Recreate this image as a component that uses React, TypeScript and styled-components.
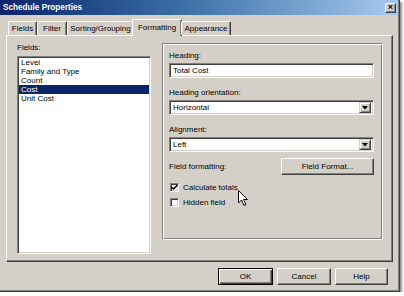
import React from "react";
import styled, { createGlobalStyle, css } from "styled-components";

const Global = createGlobalStyle`
  html, body { margin: 0; padding: 0; background: #ffffff; }
  body { font-family: "Liberation Sans", Arial, sans-serif; font-size: 8px; color: #000; }
`;

const Window = styled.div`
  position: relative;
  width: 400px;
  height: 292px;
  box-sizing: border-box;
  background: #d4d0c8;
  border-right: 1px solid #404040;
  border-bottom: 1px solid #404040;
  box-shadow: inset -1px -1px 0 #808080, 2px 2px 2px rgba(0, 0, 0, 0.45);
  display: flex;
  flex-direction: column;
`;

const TitleBar = styled.div`
  height: 15px;
  margin-right: 1px;
  background: linear-gradient(to right, #0a246a 0%, #3a6ea5 45%, #a6caf0 100%);
  display: flex;
  align-items: center;
  justify-content: space-between;
  padding: 0 2px 0 3px;
`;

const Title = styled.span`
  color: #fff;
  font-weight: bold;
  font-size: 8.2px;
  letter-spacing: 0;
`;

const CloseBtn = styled.div`
  width: 11px;
  height: 10px;
  box-sizing: border-box;
  background: #d4d0c8;
  border: 1px solid;
  border-color: #fff #404040 #404040 #fff;
  box-shadow: inset -1px -1px 0 #808080;
  display: flex;
  align-items: center;
  justify-content: center;
  font-size: 9px;
  font-weight: bold;
  line-height: 1;
`;

const Content = styled.div`
  padding: 4px 6px 0 6px;
  display: flex;
  flex-direction: column;
`;

const TabRow = styled.div`
  display: flex;
  align-items: flex-end;
  height: 16px;
  padding-left: 2px;
  position: relative;
  z-index: 1;
`;

const Tab = styled.div<{ $w: number; $active?: boolean }>`
  width: ${(p) => p.$w}px;
  height: 14px;
  box-sizing: border-box;
  border-top: 1px solid #fff;
  border-left: 1px solid #fff;
  border-right: 1px solid #404040;
  box-shadow: inset -1px 0 0 #808080;
  border-radius: 2px 2px 0 0;
  display: flex;
  align-items: center;
  justify-content: center;
  white-space: nowrap;
  background: #d4d0c8;
  ${(p) =>
    p.$active &&
    css`
      height: 17px;
      margin-bottom: -1px;
      margin-left: -2px;
      margin-right: -1px;
      padding-bottom: 2px;
    `}
`;

const Panel = styled.div`
  width: 387px;
  height: 227px;
  box-sizing: border-box;
  border: 1px solid;
  border-color: #fff #404040 #404040 #fff;
  box-shadow: inset -1px -1px 0 #808080;
  padding: 7px 9px 0 10px;
  display: flex;
  gap: 11px;
`;

const LeftCol = styled.div`
  width: 134px;
  display: flex;
  flex-direction: column;
`;

const Label = styled.div`
  height: 10px;
  line-height: 10px;
  margin-bottom: 3px;
  white-space: nowrap;
`;

const ListBox = styled.div`
  height: 198px;
  box-sizing: border-box;
  background: #fff;
  border: 1px solid;
  border-color: #808080 #fff #fff #808080;
  box-shadow: inset 1px 1px 0 #404040, inset -1px -1px 0 #d4d0c8;
  padding: 1px 1px;
  display: flex;
  flex-direction: column;
`;

const ListItem = styled.div<{ $sel?: boolean }>`
  height: 9px;
  line-height: 9px;
  padding-left: 2px;
  white-space: nowrap;
  ${(p) =>
    p.$sel &&
    css`
      background: #0a246a;
      color: #fff;
    `}
`;

const Group = styled.div`
  width: 221px;
  height: 197px;
  box-sizing: border-box;
  border: 1px solid;
  border-color: #808080 #fff #fff #808080;
  box-shadow: inset 1px 1px 0 #fff, inset -1px -1px 0 #808080;
  padding: 7px 8px 0 6px;
  display: flex;
  flex-direction: column;
`;

const GLabel = styled.div<{ $mt?: number }>`
  height: 10px;
  line-height: 10px;
  margin-top: ${(p) => p.$mt ?? 0}px;
  margin-bottom: 2px;
`;

const Sunken = css`
  box-sizing: border-box;
  background: #fff;
  border: 1px solid;
  border-color: #808080 #fff #fff #808080;
  box-shadow: inset 1px 1px 0 #404040, inset -1px -1px 0 #d4d0c8;
`;

const TextInput = styled.div`
  ${Sunken};
  height: 15px;
  padding: 0 3px;
  display: flex;
  align-items: center;
`;

const Select = styled.div`
  ${Sunken};
  height: 15px;
  padding: 2px 2px 2px 3px;
  display: flex;
  align-items: center;
  justify-content: space-between;
`;

const DropBtn = styled.div`
  width: 12px;
  height: 11px;
  box-sizing: border-box;
  background: #d4d0c8;
  border: 1px solid;
  border-color: #d4d0c8 #404040 #404040 #d4d0c8;
  box-shadow: inset 1px 1px 0 #fff, inset -1px -1px 0 #808080;
  display: flex;
  align-items: center;
  justify-content: center;
`;

const FormatRow = styled.div`
  margin-top: 6px;
  display: flex;
  align-items: center;
  justify-content: space-between;
`;

const Button = styled.div<{ $w: number; $default?: boolean }>`
  width: ${(p) => p.$w}px;
  height: 17px;
  box-sizing: border-box;
  background: #d4d0c8;
  border: 1px solid;
  border-color: #fff #404040 #404040 #fff;
  box-shadow: inset -1px -1px 0 #808080;
  display: flex;
  align-items: center;
  justify-content: center;
  ${(p) =>
    p.$default &&
    css`
      border-color: #000;
      box-shadow: inset 1px 1px 0 #fff, inset -1px -1px 0 #404040, inset -2px -2px 0 #808080;
    `}
`;

const CheckRow = styled.div<{ $mt: number }>`
  margin-top: ${(p) => p.$mt}px;
  display: flex;
  align-items: center;
  gap: 4px;
  padding-left: 1px;
`;

const CheckBox = styled.div`
  ${Sunken};
  width: 9px;
  height: 9px;
  display: flex;
  align-items: center;
  justify-content: center;
`;

const ButtonRow = styled.div`
  margin-top: 6px;
  display: flex;
  justify-content: flex-end;
  gap: 4px;
  padding-right: 5px;
`;

const Cursor = styled.svg`
  position: absolute;
  left: 238px;
  top: 190px;
`;

export default function App() {
  return (
    <>
      <Global />
      <Window>
        <TitleBar>
          <Title>Schedule Properties</Title>
          <CloseBtn>×</CloseBtn>
        </TitleBar>
        <Content>
          <TabRow>
            <Tab $w={29}>Fields</Tab>
            <Tab $w={30}>Filter</Tab>
            <Tab $w={67}>Sorting/Grouping</Tab>
            <Tab $w={50} $active>Formatting</Tab>
            <Tab $w={50}>Appearance</Tab>
          </TabRow>
          <Panel>
            <LeftCol>
              <Label>Fields:</Label>
              <ListBox>
                <ListItem>Level</ListItem>
                <ListItem>Family and Type</ListItem>
                <ListItem>Count</ListItem>
                <ListItem $sel>Cost</ListItem>
                <ListItem>Unit Cost</ListItem>
              </ListBox>
            </LeftCol>
            <Group>
              <GLabel>Heading:</GLabel>
              <TextInput>Total Cost</TextInput>
              <GLabel $mt={10}>Heading orientation:</GLabel>
              <Select>
                <span>Horizontal</span>
                <DropBtn>
                  <svg width="6" height="4" viewBox="0 0 6 4">
                    <path d="M0 0 H6 L3 3.5 Z" fill="#000" />
                  </svg>
                </DropBtn>
              </Select>
              <GLabel $mt={10}>Alignment:</GLabel>
              <Select>
                <span>Left</span>
                <DropBtn>
                  <svg width="6" height="4" viewBox="0 0 6 4">
                    <path d="M0 0 H6 L3 3.5 Z" fill="#000" />
                  </svg>
                </DropBtn>
              </Select>
              <FormatRow>
                <span>Field formatting:</span>
                <Button $w={93}>Field Format...</Button>
              </FormatRow>
              <CheckRow $mt={8}>
                <CheckBox>
                  <svg width="7" height="7" viewBox="0 0 7 7">
                    <path d="M0.5 3 L2.5 5 L6.5 1" stroke="#000" strokeWidth="1.5" fill="none" />
                  </svg>
                </CheckBox>
                <span>Calculate totals</span>
              </CheckRow>
              <CheckRow $mt={6}>
                <CheckBox />
                <span>Hidden field</span>
              </CheckRow>
            </Group>
          </Panel>
          <ButtonRow>
            <Button $w={55} $default>OK</Button>
            <Button $w={54}>Cancel</Button>
            <Button $w={53}>Help</Button>
          </ButtonRow>
        </Content>
        <Cursor width="11" height="17" viewBox="0 0 11 17">
          <path d="M0.5 0.5 V13 L3.5 10 L6 15.5 L8 14.5 L5.5 9.5 H9.5 Z" fill="#fff" stroke="#000" strokeWidth="1" />
        </Cursor>
      </Window>
    </>
  );
}
